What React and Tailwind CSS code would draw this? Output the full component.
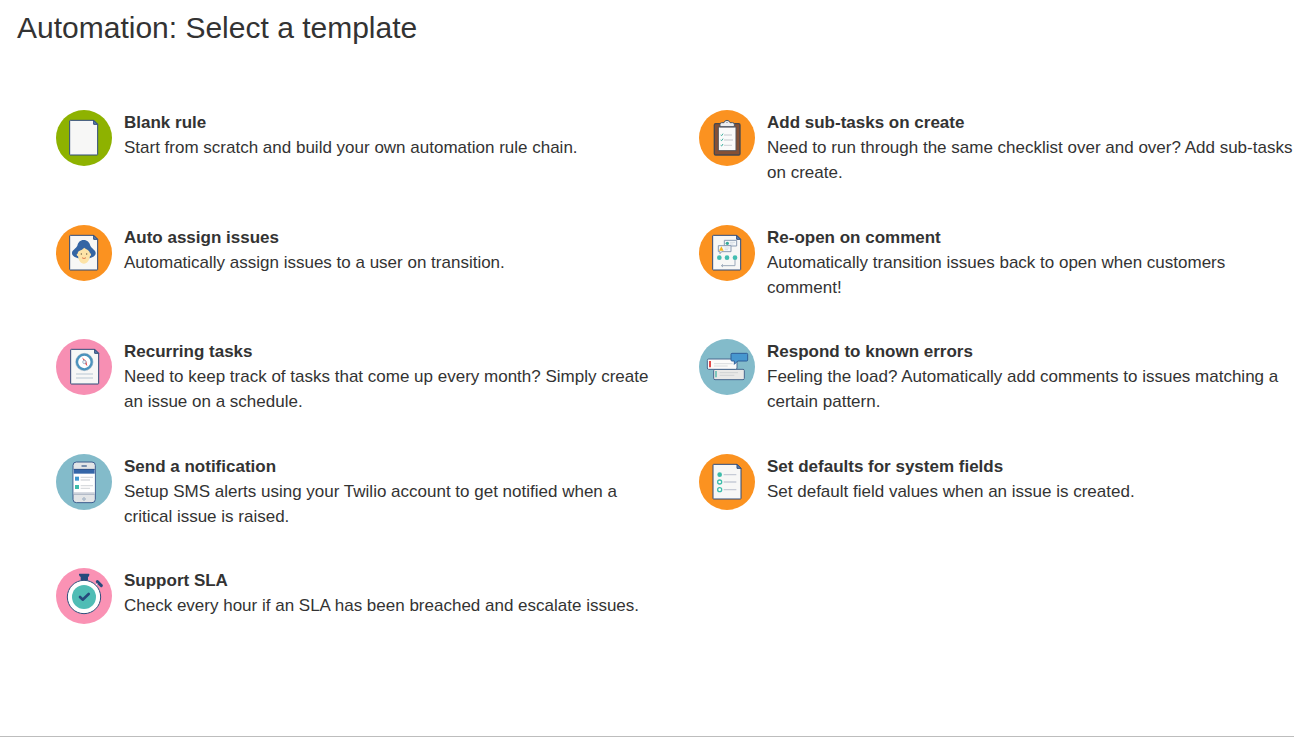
import React from "react";

function Badge({ fill, children }) {
  return (
    <svg viewBox="18 17 168 168" className="size-14 shrink-0" aria-hidden="true">
      <circle cx="102" cy="101" r="84" fill={fill} />
      {children}
    </svg>
  );
}

function Paper({ x = 58 }) {
  return (
    <g transform={`translate(${x} 0)`} stroke="#2f4a78" strokeWidth="3" strokeLinejoin="round">
      <path d="M3 48H73L85 60V150Q85 152 83 152H3Q1 152 1 150V50Q1 48 3 48Z" fill="#f7f7f6" />
      <path d="M73 48V60H85Z" fill="#5b83b5" />
    </g>
  );
}

function BlankIcon() {
  return (
    <Badge fill="#8eb200">
      <Paper />
    </Badge>
  );
}

function AssignIcon() {
  return (
    <Badge fill="#fb9220">
      <Paper />
      <path d="M101 62C112 62 118 69 121 79C125 88 137 92 137 101C137 110 128 114 119 117H84C75 114 66 110 66 101C66 92 78 88 82 79C85 69 90 62 101 62Z" fill="#3465a4" />
      <path d="M83 103C83 96 88 95 92 93C98 90 101 86 103 85C106 90 119 91 120 102C124 102 124 110 120 110C118 124 111 133 102 133C92 133 86 124 84 110C79 110 79 103 83 103Z" fill="#fde3a7" />
      <circle cx="94" cy="104" r="2" fill="#6b5a45" />
      <circle cx="110" cy="104" r="2" fill="#6b5a45" />
      <path d="M97 116Q102 120 107 116" fill="none" stroke="#e07b50" strokeWidth="3" strokeLinecap="round" />
    </Badge>
  );
}

function RecurringIcon() {
  return (
    <Badge fill="#f78fb3">
      <Paper x={61} />
      <circle cx="103" cy="86" r="22" fill="#fff" stroke="#4c93bd" strokeWidth="7" />
      <circle cx="103" cy="86" r="26" fill="none" stroke="#39709b" strokeWidth="1" />
      <path d="M96 72L109 84L104 88Z" fill="#e5484d" />
      <path d="M109 84L112 99L101 87Z" fill="#e5484d" />
      <circle cx="103" cy="86" r="5" fill="#eef2f5" stroke="#7f9fbd" strokeWidth="2" />
      <path d="M78 122H129M78 134H129" stroke="#b9c7d3" strokeWidth="3" />
    </Badge>
  );
}

function PhoneIcon() {
  return (
    <Badge fill="#83bbca">
      <rect x="69" y="41" width="67" height="122" rx="10" fill="#e3e5e7" stroke="#3b5c8e" strokeWidth="3" />
      <rect x="71" y="62" width="63" height="76" fill="#fff" />
      <rect x="71" y="62" width="63" height="14" fill="#3566a8" />
      <path d="M71 63H134" stroke="#28457a" strokeWidth="2" />
      <path d="M71 138H134M71 134H134" stroke="#8593a8" strokeWidth="2" />
      <path d="M96 53H109" stroke="#54719b" strokeWidth="4" strokeLinecap="round" />
      <rect x="75" y="85" width="12" height="12" fill="#3d95cf" />
      <rect x="75" y="110" width="12" height="12" fill="#3dbcaa" />
      <path d="M92 87H129M92 95H120M92 112H129M92 120H120" stroke="#d9dcdf" strokeWidth="4" />
      <circle cx="102" cy="152" r="4" fill="#c8d2dc" stroke="#8fa3b8" strokeWidth="2" />
    </Badge>
  );
}

function StopwatchIcon() {
  return (
    <Badge fill="#fa92b4">
      <path d="M89 34H116Q119 34 118 38L116 43H114V58H92V43H90L87 38Q86 34 89 34Z" fill="#264a7c" />
      <path d="M142 58L154 70" stroke="#264a7c" strokeWidth="9" strokeLinecap="round" />
      <path d="M135 71L142 64" stroke="#fff" strokeWidth="3" />
      <circle cx="102" cy="104" r="50" fill="#fff" stroke="#2f4f7c" strokeWidth="3" />
      <circle cx="102" cy="104" r="36" fill="#50bdb5" />
      <path d="M90 104L98 112L116 95" fill="none" stroke="#264a7c" strokeWidth="8" strokeLinecap="round" strokeLinejoin="round" />
    </Badge>
  );
}

function ClipboardIcon() {
  return (
    <Badge fill="#fb9220">
      <rect x="64" y="58" width="77" height="94" rx="4" fill="#855035" stroke="#45474f" strokeWidth="4" />
      <rect x="76" y="68" width="53" height="71" fill="#fafafa" stroke="#57555a" strokeWidth="3" />
      <path d="M81 67V60Q81 55 86 55H93Q95 48 102 48Q109 48 111 55H119Q124 55 124 60V67Z" fill="#eceef0" stroke="#4b5563" strokeWidth="3" />
      <circle cx="102" cy="54" r="2" fill="#6b7280" />
      <g fill="none" stroke="#3dae9e" strokeWidth="3">
        <path d="M83 92L86 94L90 88M83 107L86 109L90 103M83 123L86 125L90 119" />
      </g>
      <path d="M93 92H117M93 107H120M93 123H117" stroke="#d5d8dc" strokeWidth="4" />
    </Badge>
  );
}

function ReopenIcon() {
  return (
    <Badge fill="#fb9220">
      <Paper />
      <path d="M94 63H131V80H94Z" fill="#f4f7f9" stroke="#8a9bb1" strokeWidth="3" />
      <circle cx="103" cy="72" r="5" fill="#35a99a" />
      <path d="M111 69H126M111 74H121" stroke="#c9d1d9" strokeWidth="2" />
      <path d="M76 79H114V97H86L81 103V97H76Z" fill="#f4f7f9" stroke="#8a9bb1" strokeWidth="3" strokeLinejoin="round" />
      <path d="M85 81L92 94H78Z" fill="#f5b41d" />
      <path d="M95 86H109M95 91H105" stroke="#c9d1d9" strokeWidth="2" />
      <path d="M126 115V139H86M90 135L85 139L90 143" fill="none" stroke="#9ba9ba" strokeWidth="3" />
      <g fill="#43bdb0">
        <circle cx="79" cy="115" r="7" />
        <circle cx="102" cy="115" r="7" />
        <circle cx="126" cy="115" r="7" />
      </g>
    </Badge>
  );
}

function ErrorsIcon() {
  return (
    <Badge fill="#83bbca">
      <rect x="62" y="108" width="92" height="31" rx="4" fill="#e9e9e7" stroke="#48688f" strokeWidth="3" />
      <path d="M69 113V132" stroke="#45b5a6" strokeWidth="4" />
      <path d="M80 118H135M80 126H124" stroke="#cfd2d4" strokeWidth="3" />
      <rect x="43" y="77" width="89" height="31" rx="4" fill="#fbfbfa" stroke="#48688f" strokeWidth="3" />
      <path d="M51 83V102" stroke="#e34b4b" strokeWidth="6" />
      <path d="M63 91H119M63 98H104" stroke="#d9dcde" strokeWidth="3" />
      <path d="M117 60H161Q164 60 164 63V80Q164 83 161 83H134L124 93V83H117Q114 83 114 80V63Q114 60 117 60Z" fill="#4797cf" stroke="#315e98" strokeWidth="3" strokeLinejoin="round" />
    </Badge>
  );
}

function DefaultsIcon() {
  return (
    <Badge fill="#fb9220">
      <Paper x={59} />
      <circle cx="80" cy="79" r="7" fill="#3dbcaa" />
      <circle cx="80" cy="101" r="6" fill="#fff" stroke="#3dbcaa" strokeWidth="4" />
      <circle cx="80" cy="124" r="6" fill="#fff" stroke="#3dbcaa" strokeWidth="4" />
      <path d="M92 79H130M92 101H130M92 124H130" stroke="#c6cbd6" strokeWidth="4" />
    </Badge>
  );
}

const templates = [
  { Icon: BlankIcon, name: "Blank rule", text: "Start from scratch and build your own automation rule chain." },
  { Icon: ClipboardIcon, name: "Add sub-tasks on create", text: "Need to run through the same checklist over and over? Add sub-tasks on create." },
  { Icon: AssignIcon, name: "Auto assign issues", text: "Automatically assign issues to a user on transition." },
  { Icon: ReopenIcon, name: "Re-open on comment", text: "Automatically transition issues back to open when customers comment!" },
  { Icon: RecurringIcon, name: "Recurring tasks", text: "Need to keep track of tasks that come up every month? Simply create an issue on a schedule." },
  { Icon: ErrorsIcon, name: "Respond to known errors", text: "Feeling the load? Automatically add comments to issues matching a certain pattern." },
  { Icon: PhoneIcon, name: "Send a notification", text: "Setup SMS alerts using your Twilio account to get notified when a critical issue is raised." },
  { Icon: DefaultsIcon, name: "Set defaults for system fields", text: "Set default field values when an issue is created." },
  { Icon: StopwatchIcon, name: "Support SLA", text: "Check every hour if an SLA has been breached and escalate issues." },
];

export default function App() {
  return (
    <main className="flex min-h-screen flex-col overflow-hidden border-b border-[#bdbdbd] bg-white pb-[53px] font-['Liberation_Sans',Arial,sans-serif] text-[#333]">
      <h1 className="px-[17px] pt-2 text-[30px] leading-10">Automation: Select a template</h1>
      <ul className="mt-[62px] -mr-1 ml-14 grid flex-1 auto-rows-fr grid-cols-2 gap-x-11">
        {templates.map(({ Icon, name, text }) => (
          <li key={name}>
            <button type="button" className="flex w-full cursor-pointer items-start gap-3 text-left text-[17px] leading-[25px]">
              <Icon />
              <span className="flex min-w-0 flex-col">
                <strong className="font-bold">{name}</strong>
                <span>{text}</span>
              </span>
            </button>
          </li>
        ))}
      </ul>
    </main>
  );
}
